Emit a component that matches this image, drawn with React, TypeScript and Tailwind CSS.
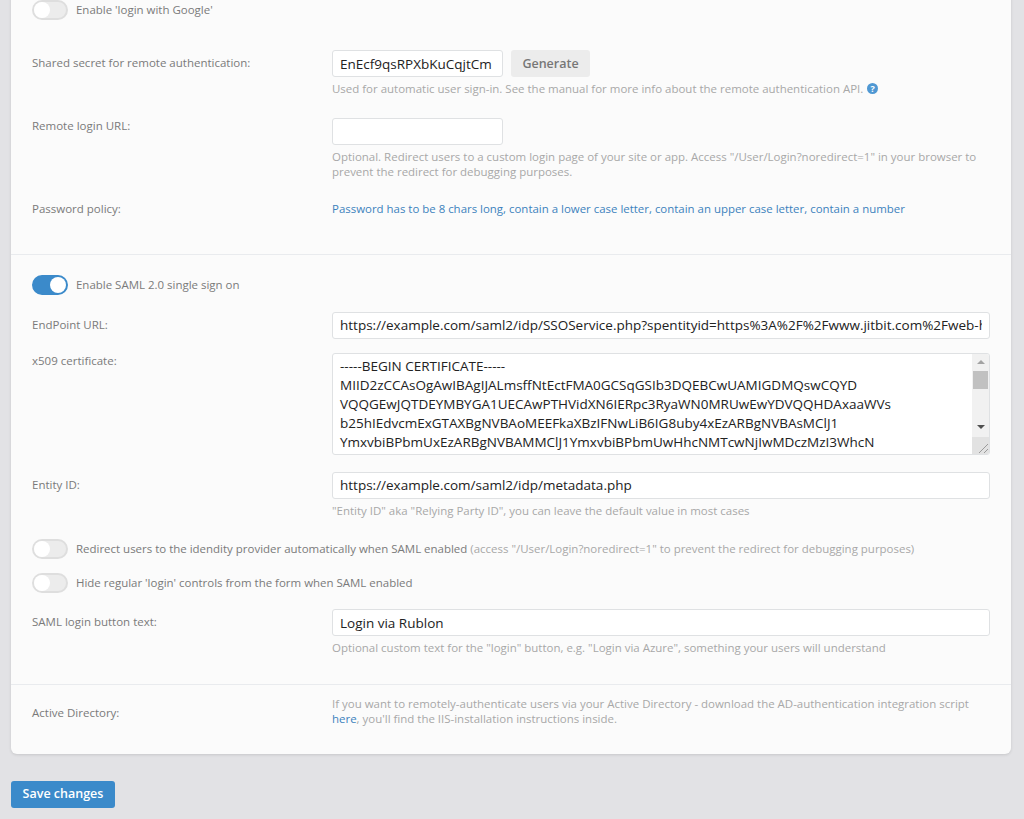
import { type ReactNode } from "react";

const font = { fontFamily: "'Open Sans', sans-serif" };

const Toggle = ({ on = false }: { on?: boolean }) => (
  <span
    className={
      on
        ? "flex h-5 w-9 shrink-0 items-center justify-end rounded-full border-2 border-[#3b8aca] bg-[#3b8aca]"
        : "flex h-5 w-9 shrink-0 items-center rounded-full border-2 border-[#dedede] bg-[#ececec]"
    }
  >
    <span className="h-4 w-4 rounded-full bg-white" />
  </span>
);

const ToggleRow = ({ on, className, children }: { on?: boolean; className?: string; children: ReactNode }) => (
  <div className={`flex items-center gap-2 text-[11.48px] leading-5 text-[#7a7a7a] ${className ?? ""}`}>
    <Toggle on={on} />
    <span>{children}</span>
  </div>
);

const TextInput = ({ value, className }: { value?: string; className?: string }) => (
  <input
    readOnly
    value={value ?? ""}
    className={`h-[27px] rounded-[3px] border border-[#dfe1e3] bg-white px-[7px] text-[13.5px] text-[#222] outline-none ${className ?? ""}`}
  />
);

const Row = ({
  label,
  className,
  labelClass,
  children,
}: {
  label: string;
  className?: string;
  labelClass?: string;
  children: ReactNode;
}) => (
  <div className={`flex ${className ?? ""}`}>
    <label className={`w-[300px] shrink-0 text-[11.5px] leading-4 text-[#7a7a7a] ${labelClass ?? ""}`}>{label}</label>
    <div className="min-w-0 flex-1">{children}</div>
  </div>
);

const Help = ({ className, children }: { className?: string; children: ReactNode }) => (
  <p className={`text-[11.48px] leading-[15.5px] text-[#a8a8a8] ${className ?? ""}`}>{children}</p>
);

const certLines = [
  "-----BEGIN CERTIFICATE-----",
  "MIID2zCCAsOgAwIBAgIJALmsffNtEctFMA0GCSqGSIb3DQEBCwUAMIGDMQswCQYD",
  "VQQGEwJQTDEYMBYGA1UECAwPTHVidXN6IERpc3RyaWN0MRUwEwYDVQQHDAxaaWVs",
  "b25hIEdvcmExGTAXBgNVBAoMEEFkaXBzIFNwLiB6IG8uby4xEzARBgNVBAsMClJ1",
  "YmxvbiBPbmUxEzARBgNVBAMMClJ1YmxvbiBPbmUwHhcNMTcwNjIwMDczMzI3WhcN",
];

const CertBox = () => (
  <div className="flex h-[102px] overflow-hidden rounded-[3px] border border-[#dfe1e3] bg-white">
    <div className="min-w-0 flex-1 overflow-hidden px-[7px] pt-[3px] text-[13.5px] leading-[19px] whitespace-nowrap text-[#222]">
      {certLines.map((l) => (
        <div key={l}>{l}</div>
      ))}
    </div>
    <div className="flex w-[17px] shrink-0 flex-col bg-[#f1f1f1]">
      <div className="flex h-[17px] items-center justify-center">
        <span className="h-0 w-0 border-x-[4px] border-b-[4px] border-x-transparent border-b-[#a3a3a3]" />
      </div>
      <div className="mx-[1px] h-[18px] bg-[#c1c1c1]" />
      <div className="flex h-[48px] items-end justify-center pb-[8px]">
        <span className="h-0 w-0 border-x-[4px] border-t-[4px] border-x-transparent border-t-[#505050]" />
      </div>
      <div className="flex flex-1 items-end justify-end bg-[#e2e2e2]">
        <svg width="13" height="13" viewBox="0 0 13 13" className="text-[#9a9a9a]">
          <path d="M3 12 L12 3 M8 12 L12 8" stroke="currentColor" strokeWidth="1" />
        </svg>
      </div>
    </div>
  </div>
);

export default function App() {
  return (
    <div className="h-[819px] overflow-hidden bg-[#e2e2e5] pr-[13px] pl-[11px]" style={font}>
      <div className="mt-[-10px] overflow-hidden rounded-b-[6px] bg-[#fbfbfb] shadow-[0_1px_3px_rgba(0,0,0,0.12)]">
        <div className="border-b border-[#e9ebee] px-[21px] pb-[37px]">
          <ToggleRow className="pt-[10px]">Enable 'login with Google'</ToggleRow>

          <Row label="Shared secret for remote authentication:" className="mt-[30px]" labelClass="pt-[5px]">
            <div className="flex gap-2">
              <TextInput value="EnEcf9qsRPXbKuCqjtCm" className="w-[171px]" />
              <button className="h-[27px] w-[79px] rounded-[3px] bg-[#ececec] pt-[1px] text-[12.5px] font-semibold text-[#777]">
                Generate
              </button>
            </div>
            <Help className="mt-[4px] flex items-center gap-1">
              Used for automatic user sign-in. See the manual for more info about the remote authentication API.
              <span className="flex h-[11px] w-[11px] items-center justify-center rounded-full bg-[#4f98d3] text-[9px] leading-none font-bold text-white">
                ?
              </span>
            </Help>
          </Row>

          <Row label="Remote login URL:" className="mt-[21px]">
            <TextInput className="w-[171px]" />
            <Help className="mt-[4px]">
              Optional. Redirect users to a custom login page of your site or app. Access "/User/Login?noredirect=1" in your browser to prevent the redirect for debugging purposes.
            </Help>
          </Row>

          <Row label="Password policy:" className="mt-[21px]">
            <div className="text-[11.45px] leading-4 text-[#3b82bd]">
              Password has to be 8 chars long, contain a lower case letter, contain an upper case letter, contain a number
            </div>
          </Row>
        </div>

        <div className="border-b border-[#e9ebee] px-[21px] pb-[28px]">
          <ToggleRow on className="mt-[20px]">Enable SAML 2.0 single sign on</ToggleRow>

          <Row label="EndPoint URL:" className="mt-[17px] items-center">
            <TextInput
              value="https://example.com/saml2/idp/SSOService.php?spentityid=https%3A%2F%2Fwww.jitbit.com%2Fweb-helpdesk%2F"
              className="w-full"
            />
          </Row>

          <Row label="x509 certificate:" className="mt-[14px]">
            <CertBox />
          </Row>

          <Row label="Entity ID:" className="mt-[17px]" labelClass="pt-[5px]">
            <TextInput value="https://example.com/saml2/idp/metadata.php" className="w-full" />
            <Help className="mt-[4px]">"Entity ID" aka "Relying Party ID", you can leave the default value in most cases</Help>
          </Row>

          <ToggleRow className="mt-[21px]">
            Redirect users to the idendity provider automatically when SAML enabled{" "}
            <span className="text-[#a8a8a8]">(access "/User/Login?noredirect=1" to prevent the redirect for debugging purposes)</span>
          </ToggleRow>
          <ToggleRow className="mt-[14px]">Hide regular 'login' controls from the form when SAML enabled</ToggleRow>

          <Row label="SAML login button text:" className="mt-[16px]" labelClass="pt-[5px]">
            <TextInput value="Login via Rublon" className="w-full" />
            <Help className="mt-[4px]">Optional custom text for the "login" button, e.g. "Login via Azure", something your users will understand</Help>
          </Row>
        </div>

        <div className="px-[21px] pt-[11px] pb-[27px]">
          <Row label="Active Directory:" className="items-center" labelClass="pt-[4px]">
            <Help>
              If you want to remotely-authenticate users via your Active Directory - download the AD-authentication integration script{" "}
              <span className="text-[#3b82bd]">here</span>, you'll find the IIS-installation instructions inside.
            </Help>
          </Row>
        </div>
      </div>

      <button className="mt-[27px] h-[27px] w-[104px] rounded-[3px] bg-[#3b8aca] pt-[1px] text-[12.5px] font-semibold text-white">
        Save changes
      </button>
    </div>
  );
}
